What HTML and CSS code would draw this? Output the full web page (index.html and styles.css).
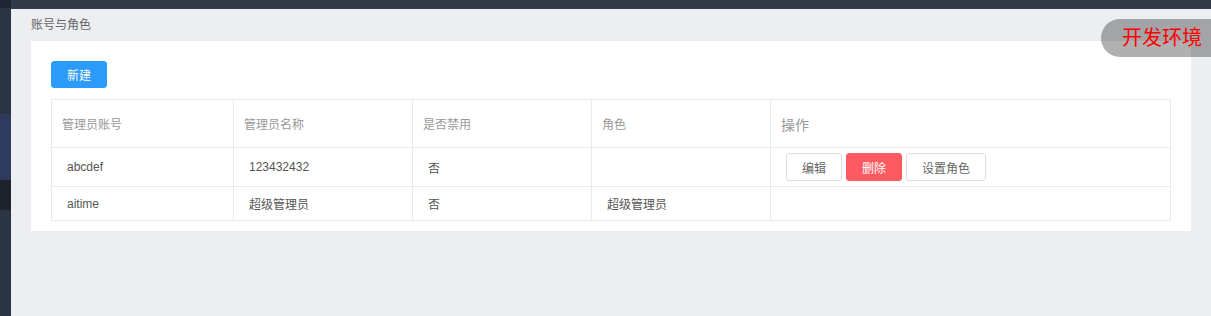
FILE: index.html
```html
<!DOCTYPE html>
<html lang="zh-CN">
<head>
    <meta charset="UTF-8">
    <title>账号与角色</title>
    <link rel="stylesheet" href="styles.css">
</head>
<body>

    <div class="sidebar">
        <div class="side-top"></div>
        <div class="side-item"></div>
        <div class="side-item active"></div>
        <div class="side-item dark"></div>
        <div class="side-item fill"></div>
    </div>

    <div class="main">
        <div class="topbar"></div>
        <div class="breadcrumb">账号与角色</div>

        <div class="card">
            <button class="btn btn-primary">新建</button>

            <table class="table">
                <colgroup>
                    <col style="width: 182px">
                    <col style="width: 179px">
                    <col style="width: 179px">
                    <col style="width: 179px">
                    <col>
                </colgroup>
                <thead>
                    <tr>
                        <th>管理员账号</th>
                        <th>管理员名称</th>
                        <th>是否禁用</th>
                        <th>角色</th>
                        <th class="th-ops">操作</th>
                    </tr>
                </thead>
                <tbody>
                    <tr>
                        <td>abcdef</td>
                        <td>123432432</td>
                        <td>否</td>
                        <td></td>
                        <td class="ops">
                            <div class="ops-group">
                                <button class="btn btn-default">编辑</button>
                                <button class="btn btn-danger">删除</button>
                                <button class="btn btn-default wide">设置角色</button>
                            </div>
                        </td>
                    </tr>
                    <tr>
                        <td>aitime</td>
                        <td>超级管理员</td>
                        <td>否</td>
                        <td>超级管理员</td>
                        <td></td>
                    </tr>
                </tbody>
            </table>
        </div>
    </div>

    <div class="env-badge">开发环境</div>

</body>
</html>
```

FILE: styles.css
```css
* {
    margin: 0;
    padding: 0;
    box-sizing: border-box;
}
body {
    display: flex;
    height: 100vh;
    background: #edeef2;
    font-family: "Liberation Sans", "Noto Sans CJK SC", sans-serif;
    font-size: 12px;
    color: #555;
    overflow: hidden;
}
.sidebar {
    width: 11px;
    flex-shrink: 0;
    display: flex;
    flex-direction: column;
    background: #2b3444;
}
.side-top {
    height: 9px;
    background: #1f2531;
}
.side-item {
    height: 122px;
}
.side-item.active {
    height: 76px;
    background: #2e3a5e;
}
.side-item.dark {
    height: 35px;
    background: #1d222c;
}
.side-item.fill {
    flex-grow: 1;
}
.main {
    flex-grow: 1;
}
.topbar {
    height: 9px;
    background: #313a4a;
}
.breadcrumb {
    height: 32px;
    line-height: 32px;
    padding: 0 20px;
    color: #666;
}
.card {
    margin: 0 20px;
    padding: 20px 20px 10px;
    background: #fff;
}
.btn {
    height: 28px;
    padding: 0 15px;
    border-radius: 3px;
    border: 1px solid #dcdee2;
    background: #fff;
    color: #666;
    font-family: inherit;
    font-size: 12px;
    cursor: pointer;
}
.btn-primary {
    width: 56px;
    height: 27px;
    padding: 0;
    border-color: #2d9bfa;
    background: #2d9bfa;
    color: #fff;
}
.btn-danger {
    border-color: #fd5a61;
    background: #fd5a61;
    color: #fff;
}
.table {
    width: 100%;
    margin-top: 11px;
    border-collapse: collapse;
    table-layout: fixed;
    border: 1px solid #e9eaf0;
}
.table th,
.table td {
    border: 1px solid #e9eaf0;
    text-align: left;
    vertical-align: middle;
}
.table th {
    height: 48px;
    padding: 0 10px;
    font-weight: normal;
    color: #999;
}
.table th.th-ops {
    font-size: 14px;
}
.table td {
    height: 34px;
    padding: 0 15px;
}
.table td.ops {
    height: 39px;
}
.ops-group {
    display: flex;
    gap: 4px;
}
.ops-group .btn {
    width: 56px;
    padding: 0;
}
.ops-group .btn.wide {
    width: 80px;
}
.env-badge {
    position: absolute;
    top: 19px;
    right: 0;
    width: 110px;
    height: 38px;
    line-height: 38px;
    padding-left: 21px;
    border-radius: 19px 0 0 19px;
    background: rgba(0, 0, 0, 0.31);
    color: #ff0000;
    font-size: 20px;
}
```
